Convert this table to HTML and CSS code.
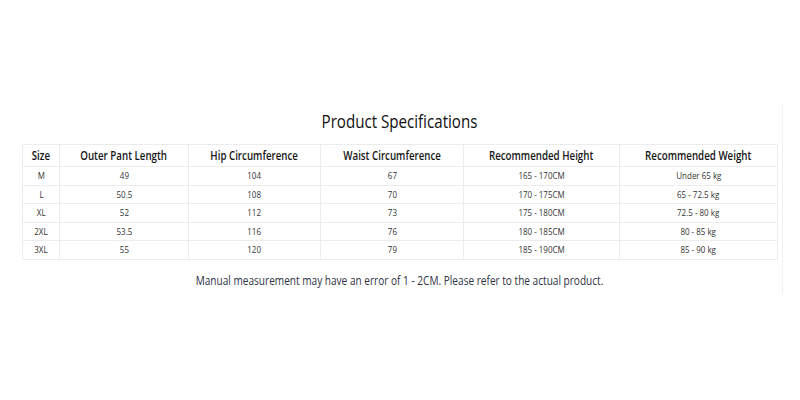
FILE: index.html
```html
<!DOCTYPE html>
<html lang="en">
<head>
<meta charset="utf-8">
<link rel="stylesheet" href="styles.css">
</head>
<body>
<section class="panel">
  <h1 class="title">Product Specifications</h1>
  <table class="spec">
    <colgroup>
      <col class="c1"><col class="c2"><col class="c3"><col class="c4"><col class="c5"><col class="c6">
    </colgroup>
    <thead>
      <tr><th><span class="t">Size</span></th><th><span class="t">Outer Pant Length</span></th><th><span class="t">Hip Circumference</span></th><th><span class="t">Waist Circumference</span></th><th><span class="t">Recommended Height</span></th><th><span class="t">Recommended Weight</span></th></tr>
    </thead>
    <tbody>
      <tr><td><span class="t">M</span></td><td><span class="t">49</span></td><td><span class="t">104</span></td><td><span class="t">67</span></td><td><span class="t">165 - 170CM</span></td><td><span class="t">Under 65 kg</span></td></tr>
      <tr><td><span class="t">L</span></td><td><span class="t">50.5</span></td><td><span class="t">108</span></td><td><span class="t">70</span></td><td><span class="t">170 - 175CM</span></td><td><span class="t">65 - 72.5 kg</span></td></tr>
      <tr><td><span class="t">XL</span></td><td><span class="t">52</span></td><td><span class="t">112</span></td><td><span class="t">73</span></td><td><span class="t">175 - 180CM</span></td><td><span class="t">72.5 - 80 kg</span></td></tr>
      <tr><td><span class="t">2XL</span></td><td><span class="t">53.5</span></td><td><span class="t">116</span></td><td><span class="t">76</span></td><td><span class="t">180 - 185CM</span></td><td><span class="t">80 - 85 kg</span></td></tr>
      <tr><td><span class="t">3XL</span></td><td><span class="t">55</span></td><td><span class="t">120</span></td><td><span class="t">79</span></td><td><span class="t">185 - 190CM</span></td><td><span class="t">85 - 90 kg</span></td></tr>
    </tbody>
  </table>
  <p class="note">Manual measurement may have an error of 1 - 2CM. Please refer to the actual product.</p>
</section>
</body>
</html>
```
FILE: styles.css
```css
html, body {
  margin: 0;
  padding: 0;
  background: #ffffff;
}
body {
  font-family: "Open Sans", "Noto Sans", sans-serif;
  color: #222;
  padding-top: 105px;
}
.panel {
  box-sizing: border-box;
  width: 783px;
  height: 189px;
  padding-left: 22px;
  border-right: 1px solid #f2f2f2;
  display: flex;
  flex-direction: column;
}
.title {
  margin: 4px 0 0 0;
  width: 755px;
  text-align: center;
  font-size: 18px;
  line-height: 24px;
  font-weight: 500;
  color: #111;
  transform: scaleX(0.84);
}
.spec {
  margin-top: 11px;
  width: 755px;
  border-collapse: collapse;
  table-layout: fixed;
}
.c1 { width: 37px; }
.c2 { width: 129px; }
.c3 { width: 132px; }
.c4 { width: 143px; }
.c5 { width: 156px; }
.c6 { width: 158px; }
.spec th, .spec td {
  border: 1px solid #ececec;
  text-align: center;
  padding: 0;
  white-space: nowrap;
}
.t {
  display: inline-block;
  transform: scaleX(0.84);
}
.spec th {
  height: 21px;
  font-size: 11.6px;
  font-weight: 600;
  color: #151515;
}
.spec td {
  height: 17.5px;
  font-size: 9.5px;
  color: #333;
}
.note {
  margin: 12px 0 0 0;
  width: 755px;
  text-align: center;
  font-size: 12px;
  line-height: 18px;
  color: #2f3344;
  transform: scaleX(0.84);
}
```
